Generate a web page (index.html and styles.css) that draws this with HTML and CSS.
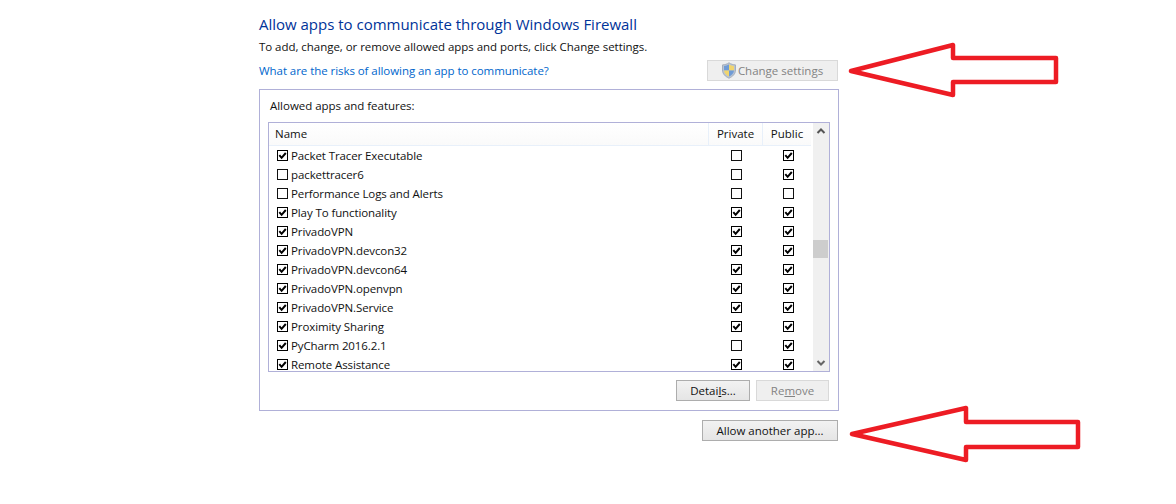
FILE: index.html
```html
<!DOCTYPE html>
<html lang="en">
<head>
<meta charset="utf-8">
<title>Allowed apps</title>
<link rel="stylesheet" href="styles.css">
</head>
<body>
<svg class="defs" width="0" height="0" aria-hidden="true">
  <symbol id="on" viewBox="0 0 11 11"><rect x="0.5" y="0.5" width="10" height="10" fill="#fff" stroke="#000"/><path d="M2.300 5.200 4.600 7.800 8.800 3" fill="none" stroke="#000" stroke-width="2"/></symbol>
  <symbol id="off" viewBox="0 0 11 11"><rect x="0.5" y="0.5" width="10" height="10" fill="#fff" stroke="#111"/></symbol>
</svg>
<main class="panel">
  <h1 class="title">Allow apps to communicate through Windows Firewall</h1>
  <p class="intro">To add, change, or remove allowed apps and ports, click Change settings.</p>
  <div class="linkrow">
    <a class="risk" href="#">What are the risks of allowing an app to communicate?</a>
    <button class="btn btn-off btn-change" type="button">
      <svg class="shield" viewBox="0 0 16 17" width="16" height="17"><path d="M8 .8C6 2.200 3.800 2.800 1.500 2.900V8c0 3.800 2.700 6.500 6.500 8.200 3.800-1.700 6.500-4.400 6.500-8.200V2.900C12.200 2.800 10 2.200 8 .8Z" fill="#b9c4d4" stroke="#a5aebb"/><path d="M8 2.600V8.500H3V3.900C4.800 3.800 6.500 3.400 8 2.600Z" fill="#6f9bd6"/><path d="M8 2.600C9.500 3.400 11.200 3.800 13 3.900V8.500H8Z" fill="#f1d56e"/><path d="M3 8.500H8V14.500C5.200 13.200 3.200 11.300 3 8.500Z" fill="#f1d56e"/><path d="M8 8.500H13C12.800 11.300 10.800 13.200 8 14.500Z" fill="#6f9bd6"/></svg>
      Change settings
    </button>
  </div>
  <section class="group">
    <div class="group-label">Allowed apps and features:</div>
    <div class="list">
      <div class="table">
        <div class="head"><span class="c-name">Name</span><span class="c-col c-private">Private</span><span class="c-col c-public">Public</span></div>
        <div class="rows">
          <div class="row"><span class="c-name"><svg class="box"><use href="#on"/></svg>Packet Tracer Executable</span><span class="c-col c-private"><svg class="box"><use href="#off"/></svg></span><span class="c-col c-public"><svg class="box"><use href="#on"/></svg></span></div>
          <div class="row"><span class="c-name"><svg class="box"><use href="#off"/></svg>packettracer6</span><span class="c-col c-private"><svg class="box"><use href="#off"/></svg></span><span class="c-col c-public"><svg class="box"><use href="#on"/></svg></span></div>
          <div class="row"><span class="c-name"><svg class="box"><use href="#off"/></svg>Performance Logs and Alerts</span><span class="c-col c-private"><svg class="box"><use href="#off"/></svg></span><span class="c-col c-public"><svg class="box"><use href="#off"/></svg></span></div>
          <div class="row"><span class="c-name"><svg class="box"><use href="#on"/></svg>Play To functionality</span><span class="c-col c-private"><svg class="box"><use href="#on"/></svg></span><span class="c-col c-public"><svg class="box"><use href="#on"/></svg></span></div>
          <div class="row"><span class="c-name"><svg class="box"><use href="#on"/></svg>PrivadoVPN</span><span class="c-col c-private"><svg class="box"><use href="#on"/></svg></span><span class="c-col c-public"><svg class="box"><use href="#on"/></svg></span></div>
          <div class="row"><span class="c-name"><svg class="box"><use href="#on"/></svg>PrivadoVPN.devcon32</span><span class="c-col c-private"><svg class="box"><use href="#on"/></svg></span><span class="c-col c-public"><svg class="box"><use href="#on"/></svg></span></div>
          <div class="row"><span class="c-name"><svg class="box"><use href="#on"/></svg>PrivadoVPN.devcon64</span><span class="c-col c-private"><svg class="box"><use href="#on"/></svg></span><span class="c-col c-public"><svg class="box"><use href="#on"/></svg></span></div>
          <div class="row"><span class="c-name"><svg class="box"><use href="#on"/></svg>PrivadoVPN.openvpn</span><span class="c-col c-private"><svg class="box"><use href="#on"/></svg></span><span class="c-col c-public"><svg class="box"><use href="#on"/></svg></span></div>
          <div class="row"><span class="c-name"><svg class="box"><use href="#on"/></svg>PrivadoVPN.Service</span><span class="c-col c-private"><svg class="box"><use href="#on"/></svg></span><span class="c-col c-public"><svg class="box"><use href="#on"/></svg></span></div>
          <div class="row"><span class="c-name"><svg class="box"><use href="#on"/></svg>Proximity Sharing</span><span class="c-col c-private"><svg class="box"><use href="#on"/></svg></span><span class="c-col c-public"><svg class="box"><use href="#on"/></svg></span></div>
          <div class="row"><span class="c-name"><svg class="box"><use href="#on"/></svg>PyCharm 2016.2.1</span><span class="c-col c-private"><svg class="box"><use href="#off"/></svg></span><span class="c-col c-public"><svg class="box"><use href="#on"/></svg></span></div>
          <div class="row"><span class="c-name"><svg class="box"><use href="#on"/></svg>Remote Assistance</span><span class="c-col c-private"><svg class="box"><use href="#on"/></svg></span><span class="c-col c-public"><svg class="box"><use href="#on"/></svg></span></div>
        </div>
      </div>
      <div class="scrollbar">
        <svg class="sb-arrow" width="16" height="17" viewBox="0 0 16 17"><path d="M4.500 10 8 6.500 11.500 10" fill="none" stroke="#555" stroke-width="2"/></svg>
        <div class="thumb"></div>
        <svg class="sb-arrow sb-down" width="16" height="17" viewBox="0 0 16 17"><path d="M4.500 7 8 10.500 11.500 7" fill="none" stroke="#666" stroke-width="2"/></svg>
      </div>
    </div>
    <div class="group-actions">
      <button class="btn btn-details" type="button">Detai<u>l</u>s...</button>
      <button class="btn btn-off btn-remove" type="button">Re<u>m</u>ove</button>
    </div>
  </section>
  <div class="footer"><button class="btn btn-allow" type="button">Allow another app...</button></div>
</main>
<svg class="arrows" width="1176" height="504" viewBox="0 0 1176 504" aria-hidden="true">
  <path d="M851 71 953 45V58H1056V82H953V95Z" fill="none" stroke="#ed1c24" stroke-width="4.500" stroke-linejoin="round"/>
  <path d="M852 434 966 408V422H1078V447H966V460Z" fill="none" stroke="#ed1c24" stroke-width="4.500" stroke-linejoin="round"/>
</svg>
</body>
</html>
```
FILE: styles.css
```css
* { box-sizing: border-box; }
html, body { margin: 0; height: 504px; overflow: hidden; background: #fff; }
body { font-family: "Open Sans", "Noto Sans", sans-serif; font-size: 11.500px; color: #111; position: relative; }
.defs { position: absolute; }
.panel { width: 580px; margin-left: 259px; padding-top: 13px; display: flex; flex-direction: column; }
.title { margin: 0; height: 22px; line-height: 22px; font-size: 15px; letter-spacing: -0.01px; font-weight: 400; color: #003399; white-space: nowrap; }
.intro { margin: 3px 0 0; height: 17px; line-height: 17px; letter-spacing: -0.04px; white-space: nowrap; }
.linkrow { margin-top: 5px; height: 21px; display: flex; align-items: center; justify-content: space-between; padding-right: 1px; }
.risk { color: #0066cc; text-decoration: none; letter-spacing: -0.06px; white-space: nowrap; }
.btn { font: inherit; height: 21px; padding: 0; border: 1px solid #adadad; background: linear-gradient(#f2f2f2, #e5e5e5); color: #111; display: flex; align-items: center; justify-content: center; white-space: nowrap; }
.btn-off { border-color: #d9d9d9; background: #efefef; color: #838383; }
.btn-change { width: 131px; gap: 1px; padding-right: 1px; }
.shield { flex: none; }
.group { margin-top: 8px; height: 322px; border: 1px solid #b0b0d8; padding: 7px 8px 0; display: flex; flex-direction: column; }
.group-label { height: 18px; line-height: 17px; padding-left: 2px; letter-spacing: -0.03px; }
.list { margin-top: 7px; height: 250px; border: 1px solid #b0b0d8; display: flex; overflow: hidden; }
.table { flex: 1; min-width: 0; padding-right: 2px; }
.head { height: 23px; display: flex; align-items: center; background: linear-gradient(#fff, #fafafa); border-bottom: 1px solid #e8f0fa; }
.head .c-name { padding-left: 6px; padding-bottom: 2px; height: 100%; display: flex; align-items: center; }
.head .c-col { height: 100%; padding-bottom: 1px; border-left: 1px solid #e8f0fa; }
.c-name { flex: 1; min-width: 0; white-space: nowrap; display: flex; align-items: center; }
.c-col { flex: none; display: flex; align-items: center; justify-content: center; }
.c-private { width: 54px; }
.c-public { width: 49px; }
.row { height: 19px; display: flex; align-items: center; letter-spacing: -0.1px; }
.row .c-name { padding-left: 8px; gap: 3px; }
.row .c-public .box { margin-left: 4px; }
.row .c-private .box { margin-left: 2px; }
.box { width: 11px; height: 11px; flex: none; }
.scrollbar { width: 16px; flex: none; background: #f0f0f0; display: flex; flex-direction: column; }
.sb-arrow { flex: none; }
.thumb { height: 18px; margin-top: 100px; margin-right: 1px; background: #cdcdcd; }
.sb-down { margin-top: auto; }
.group-actions { margin-top: 8px; display: flex; justify-content: flex-end; gap: 6px; padding-right: 1px; }
.btn-details { width: 74px; }
.btn-remove { width: 73px; }
.footer { margin-top: 9px; display: flex; justify-content: flex-end; padding-right: 1px; }
.btn-allow { width: 136px; }
.arrows { position: absolute; left: 0; top: 0; pointer-events: none; }
```
